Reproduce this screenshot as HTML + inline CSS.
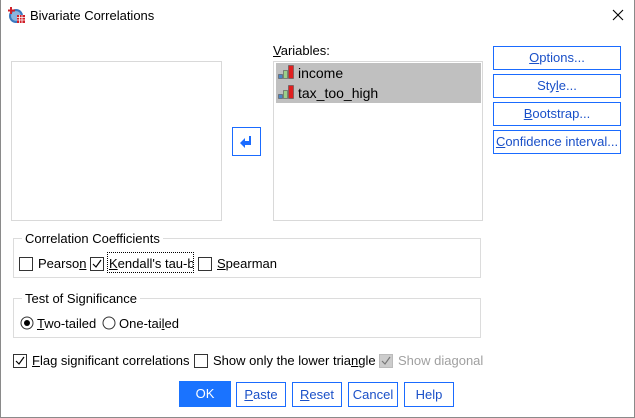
<!DOCTYPE html>
<html><head><meta charset="utf-8"><style>
*{box-sizing:border-box;margin:0;padding:0}
body{width:635px;height:418px;background:#fff;font-family:"Liberation Sans",sans-serif;font-size:13px;color:#000;position:relative;overflow:hidden}
.a{position:absolute;white-space:nowrap}
.frame{position:absolute;left:0;top:0;width:635px;height:418px;border:1px solid #8a8a8a;border-top:none}
.box{position:absolute;border:1px solid #d9d9d9}
.btn{position:absolute;border:1px solid #1a6bff;text-align:center;color:#1a50c8;line-height:22px;background:#fff}
.cb{position:absolute;width:14px;height:14px;border:1px solid #333;background:#fff}
.grp{position:absolute;border:1px solid #dcdcdc}
.leg{position:absolute;background:#fff;padding:0 3px;color:#000}
u{text-decoration:underline}
</style></head><body>
<div class="frame"></div>
<svg class="a" style="left:8px;top:6px" width="18" height="18" viewBox="0 0 18 18">
<circle cx="8" cy="10" r="7" fill="#3a78c0"/><circle cx="8" cy="10" r="5" fill="#8ab4e0"/>
<rect x="2" y="1" width="2" height="7" fill="#d0202a"/><rect x="0" y="3.5" width="7" height="2" fill="#d0202a"/>
<rect x="9" y="9" width="8" height="8" fill="#d0202a"/><path d="M9 11.5h8M9 14h8M11.5 9v8M14 9v8" stroke="#fff" stroke-width=".8"/>
</svg>
<div class="a" style="left:30px;top:8px">Bivariate Correlations</div>
<svg class="a" style="left:612px;top:9px" width="12" height="12"><path d="M1 1L11 11M11 1L1 11" stroke="#000" stroke-width="1.1"/></svg>

<div class="box" style="left:11px;top:61px;width:211px;height:160px"></div>
<div class="a" style="left:273px;top:43px"><u>V</u>ariables:</div>
<div class="box" style="left:273px;top:61px;width:210px;height:160px"></div>
<div class="a" style="left:276px;top:63px;width:205px;height:40px;background:#c0c0c0"></div>
<svg class="a" style="left:278px;top:65px" width="17" height="15"><rect x="0.5" y="9.5" width="4" height="4" fill="#4a86c8" stroke="#555" stroke-width=".6"/><rect x="5.5" y="5.5" width="4" height="8" fill="#9bd08a" stroke="#555" stroke-width=".6"/><rect x="10.5" y="0.5" width="5" height="13" fill="#e02020" stroke="#555" stroke-width=".6"/></svg>
<div class="a" style="left:298px;top:65px;font-size:14px">income</div>
<svg class="a" style="left:278px;top:85px" width="17" height="15"><rect x="0.5" y="9.5" width="4" height="4" fill="#4a86c8" stroke="#555" stroke-width=".6"/><rect x="5.5" y="5.5" width="4" height="8" fill="#9bd08a" stroke="#555" stroke-width=".6"/><rect x="10.5" y="0.5" width="5" height="13" fill="#e02020" stroke="#555" stroke-width=".6"/></svg>
<div class="a" style="left:298px;top:85px;font-size:14px">tax_too_high</div>

<div class="a" style="left:232px;top:127px;width:29px;height:29px;border:1px solid #1a6bff"></div>
<svg class="a" style="left:238px;top:134px" width="16" height="14"><path d="M2 9L7 4V7H11V2H13V11H7V14Z" fill="#1a6bff"/></svg>

<div class="btn" style="left:493px;top:46px;width:128px;height:24px"><u>O</u>ptions...</div>
<div class="btn" style="left:493px;top:74px;width:128px;height:24px">Sty<u>l</u>e...</div>
<div class="btn" style="left:493px;top:102px;width:128px;height:24px"><u>B</u>ootstrap...</div>
<div class="btn" style="left:493px;top:130px;width:128px;height:24px"><u>C</u>onfidence interval...</div>

<div class="grp" style="left:13px;top:238px;width:468px;height:40px"></div>
<div class="leg" style="left:22px;top:231px">Correlation Coefficients</div>
<div class="cb" style="left:19px;top:257px"></div>
<div class="a" style="left:38px;top:256px">Pearso<u>n</u></div>
<div class="cb" style="left:90px;top:257px"></div>
<svg class="a" style="left:91px;top:258px" width="12" height="12"><path d="M2 6L5 9L10 2" stroke="#000" fill="none" stroke-width="1.2"/></svg>
<div class="a" style="left:107px;top:252px;width:87px;height:21px;border:1px dotted #000;overflow:hidden"><div style="padding-left:1px;padding-top:3px"><u>K</u>endall's tau-b</div></div>
<div class="cb" style="left:198px;top:257px"></div>
<div class="a" style="left:217px;top:256px"><u>S</u>pearman</div>

<div class="grp" style="left:13px;top:298px;width:468px;height:40px"></div>
<div class="leg" style="left:22px;top:291px">Test of Significance</div>
<svg class="a" style="left:20px;top:316px" width="14" height="14"><circle cx="7" cy="7" r="6" fill="#fff" stroke="#333"/><circle cx="7" cy="7" r="3" fill="#000"/></svg>
<div class="a" style="left:37px;top:316px"><u>T</u>wo-tailed</div>
<svg class="a" style="left:102px;top:316px" width="14" height="14"><circle cx="7" cy="7" r="6" fill="#fff" stroke="#333"/></svg>
<div class="a" style="left:119px;top:316px">One-tai<u>l</u>ed</div>

<div class="cb" style="left:13px;top:354px"></div>
<svg class="a" style="left:14px;top:355px" width="12" height="12"><path d="M2 6L5 9L10 2" stroke="#000" fill="none" stroke-width="1.2"/></svg>
<div class="a" style="left:32px;top:353px"><u>F</u>lag significant correlations</div>
<div class="cb" style="left:194px;top:354px"></div>
<div class="a" style="left:213px;top:353px">Show only the lower tria<u>n</u>gle</div>
<div class="cb" style="left:379px;top:354px;border-color:#bbb;background:#ccc"></div>
<svg class="a" style="left:380px;top:355px" width="12" height="12"><path d="M2 6L5 9L10 2" stroke="#777" fill="none" stroke-width="1.2"/></svg>
<div class="a" style="left:398px;top:353px;color:#a0a0a0">Show diagonal</div>

<div class="btn" style="left:179px;top:381px;width:52px;height:26px;line-height:24px;background:#1a73ff;color:#fff;border-color:#1a73ff">OK</div>
<div class="btn" style="left:236px;top:382px;width:50px;height:25px;line-height:23px"><u>P</u>aste</div>
<div class="btn" style="left:292px;top:382px;width:50px;height:25px;line-height:23px"><u>R</u>eset</div>
<div class="btn" style="left:348px;top:382px;width:50px;height:25px;line-height:23px">Cancel</div>
<div class="btn" style="left:404px;top:382px;width:50px;height:25px;line-height:23px">Help</div>
</body></html>
